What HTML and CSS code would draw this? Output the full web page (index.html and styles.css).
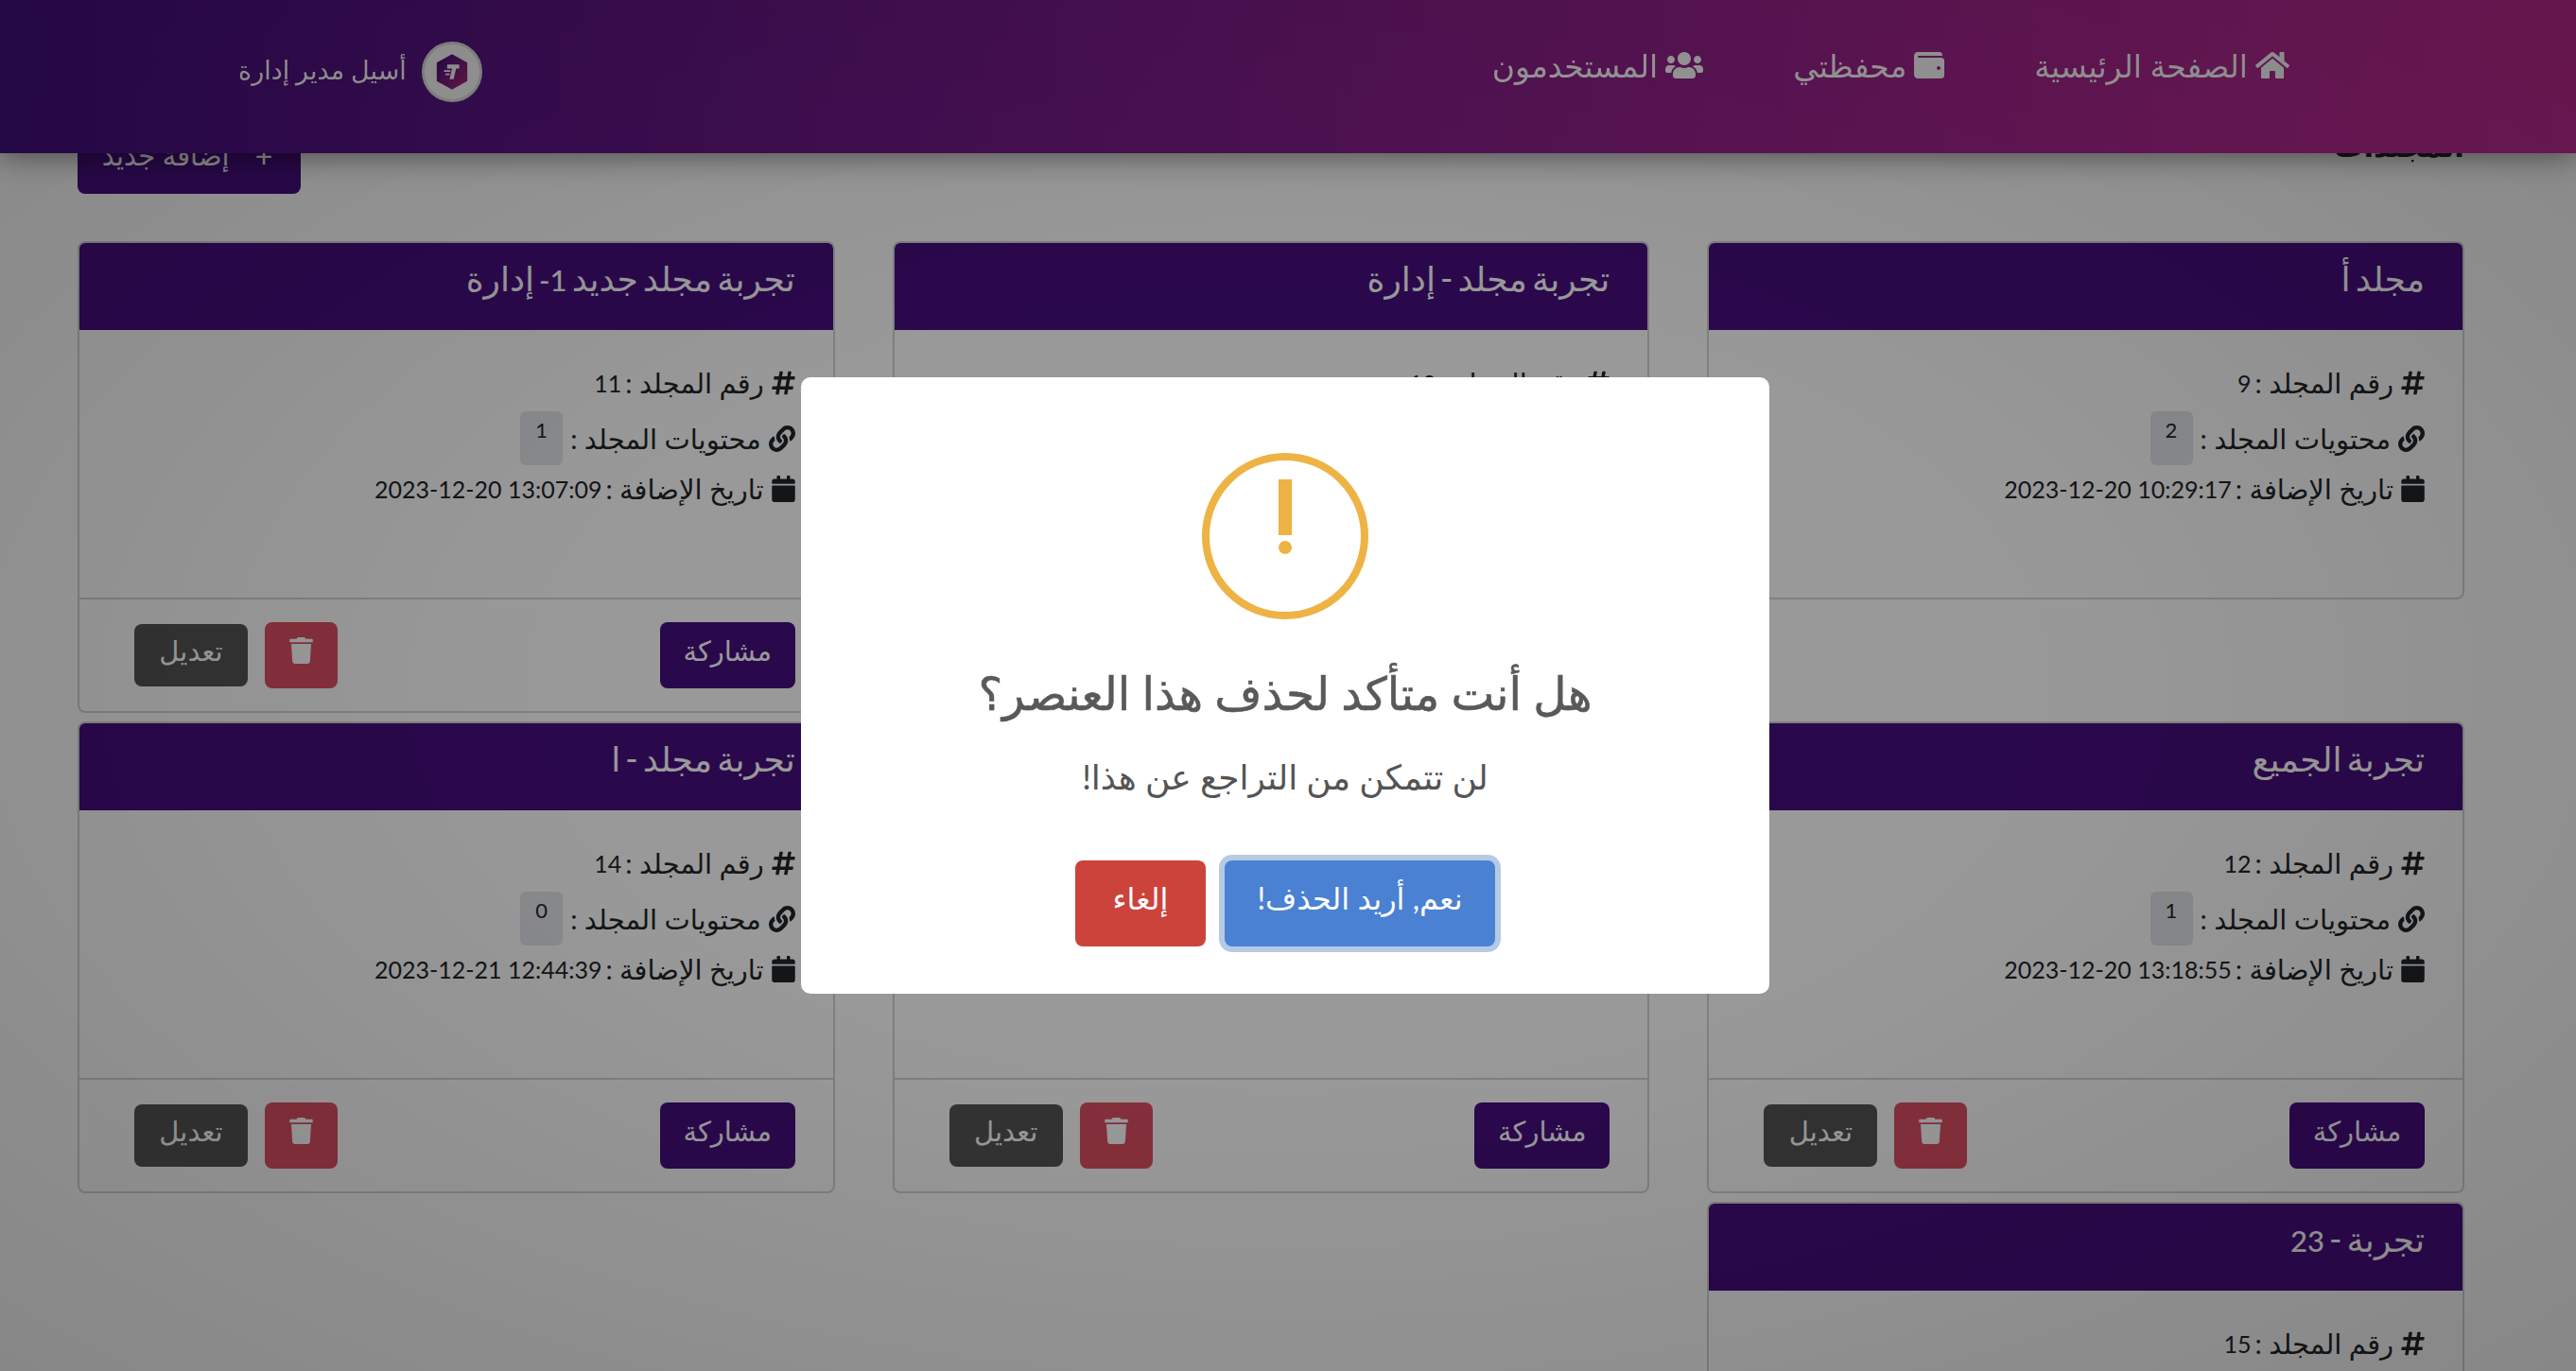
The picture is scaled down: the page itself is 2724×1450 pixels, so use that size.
FILE: index.html
```html
<!doctype html>
<html lang="ar" dir="rtl">
<head>
    <meta charset="UTF-8">
    <title>المجلدات</title>
    <link rel="stylesheet" href="styles.css">
</head>
<body>
    <svg class="sprite" xmlns="http://www.w3.org/2000/svg">
        <symbol id="i-home" viewBox="0 0 576 512"><path d="M280.37 148.26L96 300.11V464a16 16 0 0 0 16 16l112.06-.29a16 16 0 0 0 15.92-16V368a16 16 0 0 1 16-16h64a16 16 0 0 1 16 16v95.64a16 16 0 0 0 16 16.05L464 480a16 16 0 0 0 16-16V300L295.67 148.26a12.19 12.19 0 0 0-15.3 0zM571.6 251.47L488 182.56V44.05a12 12 0 0 0-12-12h-56a12 12 0 0 0-12 12v72.61L318.47 43a48 48 0 0 0-61 0L4.34 251.47a12 12 0 0 0-1.6 16.9l25.5 31A12 12 0 0 0 45.15 301l235.22-193.74a12.19 12.19 0 0 1 15.3 0L530.9 301a12 12 0 0 0 16.9-1.6l25.5-31a12 12 0 0 0-1.7-16.93z"/></symbol>
        <symbol id="i-wallet" viewBox="0 0 512 512"><path d="M461.2 128H80c-8.84 0-16-7.16-16-16s7.16-16 16-16h384c8.84 0 16-7.16 16-16 0-26.51-21.49-48-48-48H64C28.65 32 0 60.65 0 96v320c0 35.35 28.65 64 64 64h397.2c28.02 0 50.8-21.53 50.8-48V176c0-26.47-22.78-48-50.8-48zM416 336c-17.67 0-32-14.33-32-32s14.33-32 32-32 32 14.33 32 32-14.33 32-32 32z"/></symbol>
        <symbol id="i-users" viewBox="0 0 640 512"><path d="M96 224c35.3 0 64-28.7 64-64s-28.7-64-64-64-64 28.7-64 64 28.7 64 64 64zm448 0c35.3 0 64-28.7 64-64s-28.7-64-64-64-64 28.7-64 64 28.7 64 64 64zm32 32h-64c-17.6 0-33.5 7.1-45.1 18.6 40.3 22.1 68.9 62 75.1 109.4h66c17.7 0 32-14.3 32-32v-32c0-35.3-28.7-64-64-64zm-256 0c61.9 0 112-50.1 112-112S381.9 32 320 32 208 82.1 208 144s50.1 112 112 112zm76.8 32h-8.3c-20.8 10-43.9 16-68.5 16s-47.6-6-68.5-16h-8.3C179.6 288 128 339.6 128 403.2V432c0 26.5 21.5 48 48 48h288c26.5 0 48-21.5 48-48v-28.8c0-63.6-51.6-115.2-115.2-115.2zm-223.7-13.4C161.5 263.1 145.6 256 128 256H64c-35.3 0-64 28.7-64 64v32c0 17.7 14.3 32 32 32h65.9c6.3-47.4 34.9-87.3 75.2-109.4z"/></symbol>
        <symbol id="i-hash" viewBox="0 0 448 512"><path d="M440.667 182.109l7.143-40c1.313-7.355-4.342-14.109-11.813-14.109h-74.81l14.623-81.891C377.123 38.754 371.468 32 363.997 32h-40.632a12 12 0 0 0-11.813 9.891L296.175 128H197.54l14.623-81.891C213.477 38.754 207.822 32 200.35 32h-40.632a12 12 0 0 0-11.813 9.891L132.528 128H53.432a12 12 0 0 0-11.813 9.891l-7.143 40C33.163 185.246 38.818 192 46.289 192h74.81L98.242 320H19.146a12 12 0 0 0-11.813 9.891l-7.143 40C-1.123 377.246 4.532 384 12.003 384h74.81L72.19 465.891C70.877 473.246 76.532 480 84.003 480h40.632a12 12 0 0 0 11.813-9.891L151.826 384h98.634l-14.623 81.891C234.523 473.246 240.178 480 247.65 480h40.632a12 12 0 0 0 11.813-9.891L315.472 384h79.096a12 12 0 0 0 11.813-9.891l7.143-40c1.313-7.355-4.342-14.109-11.813-14.109h-74.81l22.857-128h79.096a12 12 0 0 0 11.813-9.891zM261.889 320h-98.634l22.857-128h98.634l-22.857 128z"/></symbol>
        <symbol id="i-link" viewBox="0 0 512 512"><path d="M326.612 185.391c59.747 59.809 58.927 155.698.36 214.59-.11.12-.24.25-.36.37l-67.2 67.2c-59.27 59.27-155.699 59.262-214.96 0-59.27-59.26-59.27-155.7 0-214.96l37.106-37.106c9.84-9.84 26.786-3.3 27.294 10.606.648 17.722 3.826 35.527 9.69 52.721 1.986 5.822.567 12.262-3.783 16.612l-13.087 13.087c-28.026 28.026-28.905 73.66-1.155 101.96 28.024 28.579 74.086 28.749 102.325.51l67.2-67.19c28.191-28.191 28.073-73.757 0-101.83-3.701-3.694-7.429-6.564-10.341-8.569a16.037 16.037 0 0 1-6.947-12.606c-.396-10.567 3.348-21.456 11.698-29.806l21.054-21.055c5.521-5.521 14.182-6.199 20.584-1.731a152.482 152.482 0 0 1 20.522 17.197zM467.547 44.449c-59.261-59.262-155.69-59.27-214.96 0l-67.2 67.2c-.12.12-.25.25-.36.37-58.566 58.892-59.387 154.781.36 214.59a152.454 152.454 0 0 0 20.521 17.196c6.402 4.468 15.064 3.789 20.584-1.731l21.054-21.055c8.35-8.35 12.094-19.239 11.698-29.806a16.037 16.037 0 0 0-6.947-12.606c-2.912-2.005-6.64-4.875-10.341-8.569-28.073-28.073-28.191-73.639 0-101.83l67.2-67.19c28.239-28.239 74.3-28.069 102.325.51 27.75 28.3 26.872 73.934-1.155 101.96l-13.087 13.087c-4.35 4.35-5.769 10.79-3.783 16.612 5.864 17.194 9.042 34.999 9.69 52.721.509 13.906 17.454 20.446 27.294 10.606l37.106-37.106c59.271-59.259 59.271-155.699.001-214.959z"/></symbol>
        <symbol id="i-calendar" viewBox="0 0 448 512"><path d="M12 192h424c6.6 0 12 5.4 12 12v260c0 26.5-21.5 48-48 48H48c-26.5 0-48-21.5-48-48V204c0-6.6 5.4-12 12-12zm436-44v-36c0-26.5-21.5-48-48-48h-48V12c0-6.6-5.4-12-12-12h-40c-6.6 0-12 5.4-12 12v52H160V12c0-6.6-5.4-12-12-12h-40c-6.6 0-12 5.4-12 12v52H48C21.5 64 0 85.5 0 112v36c0 6.6 5.4 12 12 12h424c6.6 0 12-5.4 12-12z"/></symbol>
        <symbol id="i-trash" viewBox="0 0 448 512"><path d="M432 32H312l-9.4-18.7A24 24 0 0 0 281.1 0H166.8a23.72 23.72 0 0 0-21.4 13.3L136 32H16A16 16 0 0 0 0 48v32a16 16 0 0 0 16 16h416a16 16 0 0 0 16-16V48a16 16 0 0 0-16-16zM53.2 467a48 48 0 0 0 47.9 45h245.8a48 48 0 0 0 47.9-45L416 128H32z"/></symbol>
        <linearGradient id="logo-fill" x1="0" y1="0" x2="1" y2="1"><stop offset="0" stop-color="#3a1080"/><stop offset="1" stop-color="#b02a78"/></linearGradient>
    </svg>

    <header class="navbar">
        <nav class="navbar__links">
            <a href="#"><svg class="icon" width="36" height="32"><use href="#i-home"/></svg>الصفحة الرئيسية</a>
            <a href="#"><svg class="icon" width="32" height="32"><use href="#i-wallet"/></svg>محفظتي</a>
            <a href="#"><svg class="icon" width="40" height="32"><use href="#i-users"/></svg>المستخدمون</a>
        </nav>
        <div class="navbar__user">
            <span class="avatar">
                <svg width="34" height="38" viewBox="0 0 40 44">
                    <path d="M20 1 38 11V33L20 43 2 33V11Z" fill="url(#logo-fill)" stroke="url(#logo-fill)" stroke-width="2" stroke-linejoin="round"/>
                    <path d="M14 13H29V18H25L22 31H17L20 18H14ZM10 20H18V22H10ZM12 24H17V26H12Z" fill="#fff"/>
                </svg>
            </span>
            <span class="navbar__name">أسيل مدير إدارة</span>
        </div>
    </header>

    <main class="page">
        <div class="toolbar">
            <h2 class="toolbar__title">المجلدات</h2>
            <a href="#" class="btn btn--primary btn--add"><span class="plus">+</span>إضافة جديد</a>
        </div>

        <div class="folders">
            <article class="card">
                <h3 class="card__head">مجلد أ</h3>
                <div class="card__body">
                    <p class="line"><svg class="icon" width="25" height="28"><use href="#i-hash"/></svg>رقم المجلد : <span class="num">9</span></p>
                    <p class="line line--badge"><svg class="icon" width="28" height="28"><use href="#i-link"/></svg>محتويات المجلد :<span class="badge">2</span></p>
                    <p class="line"><svg class="icon" width="25" height="28"><use href="#i-calendar"/></svg>تاريخ الإضافة : <bdi class="num" dir="ltr">2023-12-20 10:29:17</bdi></p>
                </div>
            </article>

            <article class="card">
                <h3 class="card__head">تجربة مجلد - إدارة</h3>
                <div class="card__body">
                    <p class="line"><svg class="icon" width="25" height="28"><use href="#i-hash"/></svg>رقم المجلد : <span class="num">10</span></p>
                    <p class="line line--badge"><svg class="icon" width="28" height="28"><use href="#i-link"/></svg>محتويات المجلد :<span class="badge">1</span></p>
                    <p class="line"><svg class="icon" width="25" height="28"><use href="#i-calendar"/></svg>تاريخ الإضافة : <bdi class="num" dir="ltr">2023-12-20 12:57:41</bdi></p>
                </div>
                <div class="card__foot">
                    <a href="#" class="btn btn--primary btn--share">مشاركة</a>
                    <div class="card__actions">
                        <a href="#" class="btn btn--danger"><svg class="icon" width="25" height="28"><use href="#i-trash"/></svg></a>
                        <a href="#" class="btn btn--dark">تعديل</a>
                    </div>
                </div>
            </article>

            <article class="card">
                <h3 class="card__head">تجربة مجلد جديد <span class="num">1-</span> إدارة</h3>
                <div class="card__body">
                    <p class="line"><svg class="icon" width="25" height="28"><use href="#i-hash"/></svg>رقم المجلد : <span class="num">11</span></p>
                    <p class="line line--badge"><svg class="icon" width="28" height="28"><use href="#i-link"/></svg>محتويات المجلد :<span class="badge">1</span></p>
                    <p class="line"><svg class="icon" width="25" height="28"><use href="#i-calendar"/></svg>تاريخ الإضافة : <bdi class="num" dir="ltr">2023-12-20 13:07:09</bdi></p>
                </div>
                <div class="card__foot">
                    <a href="#" class="btn btn--primary btn--share">مشاركة</a>
                    <div class="card__actions">
                        <a href="#" class="btn btn--danger"><svg class="icon" width="25" height="28"><use href="#i-trash"/></svg></a>
                        <a href="#" class="btn btn--dark">تعديل</a>
                    </div>
                </div>
            </article>

            <article class="card">
                <h3 class="card__head">تجربة الجميع</h3>
                <div class="card__body">
                    <p class="line"><svg class="icon" width="25" height="28"><use href="#i-hash"/></svg>رقم المجلد : <span class="num">12</span></p>
                    <p class="line line--badge"><svg class="icon" width="28" height="28"><use href="#i-link"/></svg>محتويات المجلد :<span class="badge">1</span></p>
                    <p class="line"><svg class="icon" width="25" height="28"><use href="#i-calendar"/></svg>تاريخ الإضافة : <bdi class="num" dir="ltr">2023-12-20 13:18:55</bdi></p>
                </div>
                <div class="card__foot">
                    <a href="#" class="btn btn--primary btn--share">مشاركة</a>
                    <div class="card__actions">
                        <a href="#" class="btn btn--danger"><svg class="icon" width="25" height="28"><use href="#i-trash"/></svg></a>
                        <a href="#" class="btn btn--dark">تعديل</a>
                    </div>
                </div>
            </article>

            <article class="card">
                <h3 class="card__head">تجربة مجلد</h3>
                <div class="card__body">
                    <p class="line"><svg class="icon" width="25" height="28"><use href="#i-hash"/></svg>رقم المجلد : <span class="num">13</span></p>
                    <p class="line line--badge"><svg class="icon" width="28" height="28"><use href="#i-link"/></svg>محتويات المجلد :<span class="badge">0</span></p>
                    <p class="line"><svg class="icon" width="25" height="28"><use href="#i-calendar"/></svg>تاريخ الإضافة : <bdi class="num" dir="ltr">2023-12-21 12:40:12</bdi></p>
                </div>
                <div class="card__foot">
                    <a href="#" class="btn btn--primary btn--share">مشاركة</a>
                    <div class="card__actions">
                        <a href="#" class="btn btn--danger"><svg class="icon" width="25" height="28"><use href="#i-trash"/></svg></a>
                        <a href="#" class="btn btn--dark">تعديل</a>
                    </div>
                </div>
            </article>

            <article class="card">
                <h3 class="card__head">تجربة مجلد - ا</h3>
                <div class="card__body">
                    <p class="line"><svg class="icon" width="25" height="28"><use href="#i-hash"/></svg>رقم المجلد : <span class="num">14</span></p>
                    <p class="line line--badge"><svg class="icon" width="28" height="28"><use href="#i-link"/></svg>محتويات المجلد :<span class="badge">0</span></p>
                    <p class="line"><svg class="icon" width="25" height="28"><use href="#i-calendar"/></svg>تاريخ الإضافة : <bdi class="num" dir="ltr">2023-12-21 12:44:39</bdi></p>
                </div>
                <div class="card__foot">
                    <a href="#" class="btn btn--primary btn--share">مشاركة</a>
                    <div class="card__actions">
                        <a href="#" class="btn btn--danger"><svg class="icon" width="25" height="28"><use href="#i-trash"/></svg></a>
                        <a href="#" class="btn btn--dark">تعديل</a>
                    </div>
                </div>
            </article>

            <article class="card">
                <h3 class="card__head">تجربة - <span class="num">23</span></h3>
                <div class="card__body">
                    <p class="line"><svg class="icon" width="25" height="28"><use href="#i-hash"/></svg>رقم المجلد : <span class="num">15</span></p>
                </div>
            </article>
        </div>
    </main>

    <div class="overlay">
        <div class="modal">
            <div class="modal__icon"><span class="modal__bar"></span><span class="modal__dot"></span></div>
            <h2 class="modal__title">هل أنت متأكد لحذف هذا العنصر؟</h2>
            <p class="modal__text">لن تتمكن من التراجع عن هذا!</p>
            <div class="modal__actions">
                <button class="modal__btn modal__btn--confirm">نعم, أريد الحذف!</button>
                <button class="modal__btn modal__btn--cancel">إلغاء</button>
            </div>
        </div>
    </div>
</body>
</html>
```

FILE: styles.css
```css
*, ::before, ::after {
    padding: 0;
    margin: 0;
    box-sizing: border-box;
    font-family: 'Lato', 'Noto Sans', 'DejaVu Sans', sans-serif;
}
html, body {
    height: 100%;
    overflow: hidden;
}
body {
    background: #ffffff;
    color: #212529;
    font-size: 29px;
}
a {
    color: inherit;
    text-decoration: none;
}
.sprite {
    position: absolute;
    width: 0;
    height: 0;
}
.icon {
    fill: currentColor;
    flex: none;
}
.num {
    font-size: 25px;
}
.line .num {
    margin-right: -4px;
}

/* navbar */
.navbar {
    position: fixed;
    top: 0;
    left: 0;
    right: 0;
    z-index: 10;
    height: 162px;
    display: flex;
    justify-content: space-between;
    align-items: flex-start;
    padding: 0 303px 0 252px;
    background: linear-gradient(90deg, #440f82, #c02c92);
    box-shadow: 0 4px 30px rgba(0, 0, 0, .45);
    color: #ffffff;
}
.navbar__links {
    display: flex;
    gap: 95px;
    padding-top: 47px;
    font-size: 33px;
}
.navbar__links a {
    display: flex;
    align-items: center;
    gap: 8px;
    height: 44px;
}
.navbar__user {
    display: flex;
    align-items: center;
    gap: 16px;
    padding-top: 44px;
    font-size: 27px;
}
.navbar__name {
    padding-bottom: 6px;
}
.avatar {
    width: 64px;
    height: 64px;
    border-radius: 50%;
    border: 3px solid #e0e0e0;
    background: #ffffff;
    display: flex;
    align-items: center;
    justify-content: center;
}

/* page */
.page {
    padding: 135px 118px 0 82px;
}
.toolbar {
    display: flex;
    justify-content: space-between;
    align-items: flex-start;
    margin-bottom: 50px;
}
.toolbar__title {
    font-size: 31px;
    font-weight: 700;
}
.folders {
    display: grid;
    grid-template-columns: repeat(3, 1fr);
    gap: 9px 61px;
    align-items: start;
}

/* card */
.card {
    border: 2px solid #d4d4d4;
    border-radius: 8px;
    background: #ffffff;
    overflow: hidden;
}
.card__head {
    height: 92px;
    padding: 15px 40px 0;
    background: #470e7f;
    color: #ffffff;
    font-size: 36px;
    font-weight: 500;
    word-spacing: -4px;
}
.card__head .num {
    font-size: 31px;
}
.card__body {
    height: 283px;
    padding: 36px 40px 0;
}
.line {
    display: flex;
    align-items: center;
    gap: 8px;
    height: 40px;
    margin-bottom: 10px;
}
.line--badge {
    height: 57px;
    margin-bottom: 5px;
}
.badge {
    width: 45px;
    height: 57px;
    padding-top: 6px;
    border-radius: 6px;
    background: #e4e6ea;
    text-align: center;
    font-size: 22px;
}
.card__foot {
    display: flex;
    justify-content: space-between;
    align-items: center;
    padding: 24px 40px;
    border-top: 2px solid #d4d4d4;
}
.card__actions {
    display: flex;
    align-items: center;
    gap: 18px;
    margin-left: 18px;
}
.btn {
    display: flex;
    align-items: center;
    justify-content: center;
    padding-bottom: 10px;
    border-radius: 8px;
    font-size: 29px;
    color: #ffffff;
}
.btn--primary {
    background: #470e7f;
    height: 70px;
}
.btn--share {
    width: 143px;
}
.btn--add {
    width: 236px;
    gap: 27px;
    padding-right: 4px;
    padding-bottom: 12px;
}
.plus {
    font-size: 32px;
}
.btn--danger {
    width: 77px;
    height: 70px;
    background: #dd5064;
}
.btn--dark {
    width: 120px;
    height: 66px;
    background: #555555;
}

/* alert */
.overlay {
    position: fixed;
    top: 0;
    left: 0;
    right: 0;
    bottom: 0;
    z-index: 20;
    display: flex;
    align-items: center;
    justify-content: center;
    padding-right: 6px;
    background: radial-gradient(ellipse at center, rgba(0, 0, 0, .40) 40%, rgba(0, 0, 0, .47) 100%);
}
.modal {
    width: 1024px;
    height: 652px;
    padding-top: 80px;
    background: #ffffff;
    border-radius: 10px;
    display: flex;
    flex-direction: column;
    align-items: center;
}
.modal__icon {
    width: 176px;
    height: 176px;
    border: 8px solid #eeb345;
    border-radius: 50%;
    display: flex;
    flex-direction: column;
    align-items: center;
    padding-top: 20px;
    margin-bottom: 50px;
}
.modal__bar {
    width: 14px;
    height: 59px;
    background: #eeb345;
}
.modal__dot {
    width: 14px;
    height: 14px;
    margin-top: 6px;
    border-radius: 50%;
    background: #eeb345;
}
.modal__title {
    height: 60px;
    line-height: 54px;
    font-size: 48.5px;
    font-weight: 500;
    -webkit-text-stroke: .6px #595959;
    color: #595959;
}
.modal__text {
    height: 60px;
    line-height: 48px;
    margin-top: 32px;
    font-size: 36px;
    color: #545454;
}
.modal__actions {
    display: flex;
    gap: 20px;
    margin-top: 53px;
}
.modal__btn {
    height: 91px;
    padding-bottom: 12px;
    border: none;
    border-radius: 8px;
    font-size: 32px;
    color: #ffffff;
}
.modal__btn--confirm {
    width: 286px;
    background: #4a81d2;
    box-shadow: 0 0 0 6px #b6cae4;
}
.modal__btn--cancel {
    width: 138px;
    background: #cc433c;
}
```
